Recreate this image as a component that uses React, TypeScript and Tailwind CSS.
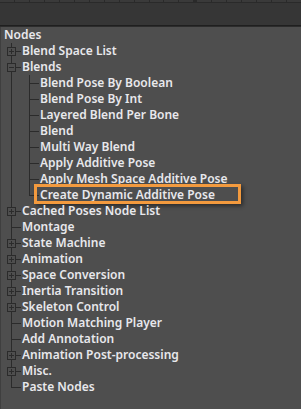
import React from "react";

type Row = { label: string; depth: 0 | 1 | 2; box?: "plus" | "minus"; last?: boolean; highlight?: boolean };

const rows: Row[] = [
  { label: "Nodes", depth: 0 },
  { label: "Blend Space List", depth: 1, box: "plus" },
  { label: "Blends", depth: 1, box: "minus" },
  { label: "Blend Pose By Boolean", depth: 2 },
  { label: "Blend Pose By Int", depth: 2 },
  { label: "Layered Blend Per Bone", depth: 2 },
  { label: "Blend", depth: 2 },
  { label: "Multi Way Blend", depth: 2 },
  { label: "Apply Additive Pose", depth: 2 },
  { label: "Apply Mesh Space Additive Pose", depth: 2 },
  { label: "Create Dynamic Additive Pose", depth: 2, last: true, highlight: true },
  { label: "Cached Poses Node List", depth: 1, box: "plus" },
  { label: "Montage", depth: 1 },
  { label: "State Machine", depth: 1, box: "plus" },
  { label: "Animation", depth: 1, box: "plus" },
  { label: "Space Conversion", depth: 1, box: "plus" },
  { label: "Inertia Transition", depth: 1, box: "plus" },
  { label: "Skeleton Control", depth: 1, box: "plus" },
  { label: "Motion Matching Player", depth: 1 },
  { label: "Add Annotation", depth: 1 },
  { label: "Animation Post-processing", depth: 1, box: "plus" },
  { label: "Misc.", depth: 1, box: "plus" },
  { label: "Paste Nodes", depth: 1, last: true },
];

const LINE = "#2b2b2b";

function Gutter({ row }: { row: Row }) {
  if (row.depth === 0) return <div className="w-[3px] shrink-0" />;
  const w = row.depth === 1 ? 21 : 39;
  return (
    <svg width={w} height={16} className="shrink-0 block" shapeRendering="crispEdges">
      {row.depth === 1 ? (
        <>
          <line x1={10.5} y1={0} x2={10.5} y2={row.last ? 8.5 : 16} stroke={LINE} />
          <line x1={10.5} y1={8.5} x2={20} y2={8.5} stroke={LINE} />
          {row.box && (
            <>
              <rect x={6.5} y={4.5} width={8} height={8} fill="#4e4e4e" stroke={LINE} />
              <line x1={8} y1={8.5} x2={13} y2={8.5} stroke={LINE} />
              {row.box === "plus" && <line x1={10.5} y1={6} x2={10.5} y2={11} stroke={LINE} />}
            </>
          )}
        </>
      ) : (
        <>
          <line x1={10.5} y1={0} x2={10.5} y2={16} stroke={LINE} />
          <line x1={28.5} y1={0} x2={28.5} y2={row.last ? 8.5 : 16} stroke={LINE} />
          <line x1={28.5} y1={8.5} x2={38} y2={8.5} stroke={LINE} />
        </>
      )}
    </svg>
  );
}

export default function App() {
  return (
    <div
      className="w-[301px] h-[409px] overflow-hidden flex flex-col bg-[#4e4e4e]"
      style={{ fontFamily: '"Noto Sans", "DejaVu Sans", sans-serif' }}
    >
      <div className="h-[3px] shrink-0 flex bg-[#2a2a2a] gap-px">
        {Array.from({ length: 20 }).map((_, i) => (
          <div key={i} className={`h-[2px] w-[15px] bg-[#3a3a3a] ${i === 13 ? "ml-[3px]" : ""}`} />
        ))}
      </div>
      <div className="h-[22px] shrink-0 bg-[#363636]" />
      <div className="h-[1px] shrink-0 bg-[#1f1f1f]" />
      <div className="h-[1px] shrink-0 bg-[#2c2c2c]" />
      <div className="flex-1 flex flex-col border-l border-[#3f3f3f]">
        {rows.map((r, i) => (
          <div key={i} className="relative h-[16px] flex items-center">
            <Gutter row={r} />
            <span className="text-[12px] leading-[16px] font-semibold text-[#e8e8ec] whitespace-nowrap">{r.label}</span>
            {r.highlight && (
              <div className="absolute left-[33px] top-[-3px] w-[207px] h-[20px] border-[3px] border-[#f39a3e] shadow-[2px_2px_4px_rgba(0,0,0,0.45)]" />
            )}
          </div>
        ))}
      </div>
    </div>
  );
}
